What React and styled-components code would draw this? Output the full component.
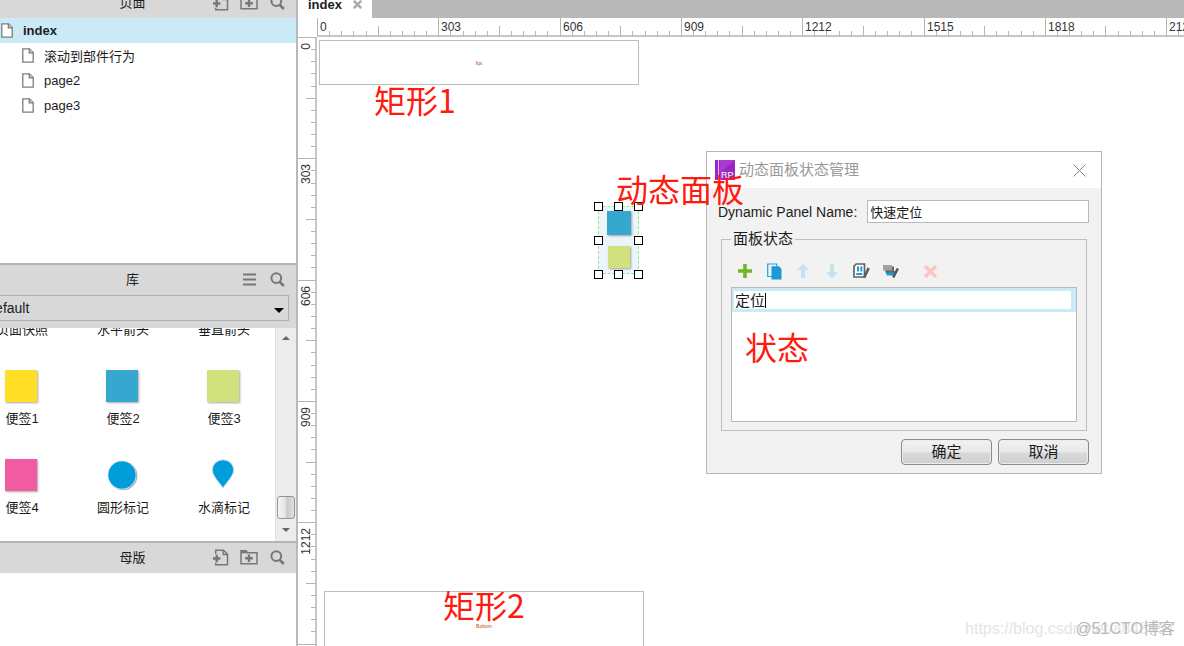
import React from 'react';
import styled, { createGlobalStyle } from 'styled-components';

const GlobalStyle = createGlobalStyle`
	* {
		box-sizing: border-box;
	}
	body {
		margin: 0;
		overflow: hidden;
		background: #fff;
		color: #1c1c1c;
		font-family: "Liberation Sans", "Noto Sans CJK SC", sans-serif;
		font-size: 13px;
	}
	button, input, select {
		font-family: inherit;
		color: inherit;
		margin: 0;
	}
`

const Shell = styled.div`
	display: flex;
	height: 100vh;
	overflow: hidden;
`

/* ---------- sidebar ---------- */

const Sidebar = styled.aside`
	display: flex;
	flex-direction: column;
	flex: none;
	width: 329px;
	margin-left: -31px;
	border-right: 2px solid #b9b9b9;
`

const Panel = styled.section`
	display: flex;
	flex-direction: column;
	flex: ${p => p.$grow ? '1' : 'none'};
	height: ${p => p.$height || 'auto'};
	margin-top: ${p => p.$tucked ? '-12px' : '0'};
	border-top: ${p => p.$tucked ? '0' : '2px solid #b4b4b4'};
`

const PanelHeader = styled.header`
	display: grid;
	grid-template-columns: 1fr auto 1fr;
	align-items: center;
	flex: none;
	height: 30px;
	padding-right: 10px;
	background: #d8d8d8;
`

const PanelTitle = styled.h2`
	grid-column: 2;
	margin: 0;
	padding-left: 10px;
	font-size: 13px;
	font-weight: 400;
	line-height: 18px;
`

const PanelActions = styled.div`
	display: flex;
	justify-content: flex-end;
	gap: 10px;
	padding-bottom: 2px;
`

const IconButton = styled.button`
	display: flex;
	align-items: center;
	justify-content: center;
	width: 18px;
	height: 18px;
	padding: 0;
	border: 0;
	background: none;
	color: #777;
`

const Tree = styled.ul`
	margin: 0;
	padding: 0;
	list-style: none;
`

const TreeItem = styled.button`
	display: flex;
	align-items: center;
	gap: 10px;
	width: 100%;
	height: 25px;
	padding: 0 0 0 ${p => p.$child ? '53px' : '32px'};
	border: 0;
	background: ${p => p.$selected ? '#cbeaf8' : 'none'};
	font-size: 13px;
	font-weight: ${p => p.$selected ? '700' : '400'};
	text-align: left;
`

const LibraryPicker = styled.div`
	position: relative;
	padding: 0 7px 7px;
	background: #d8d8d8;

	&:after {
		content: '';
		position: absolute;
		right: 12px;
		top: 13px;
		border: 5px solid transparent;
		border-top-color: #000;
		border-bottom: 0;
		pointer-events: none;
	}
`

const LibrarySelect = styled.select`
	appearance: none;
	display: block;
	width: 100%;
	height: 26px;
	padding: 0 8px;
	border: 1px solid #b0b0b0;
	border-radius: 0;
	background: #d8d8d8;
	font-size: 14px;
`

const LibraryBody = styled.div`
	display: flex;
	flex: 1;
	min-height: 0;
`

const WidgetScroller = styled.div`
	flex: 1;
	overflow: hidden;
	padding-left: 1px;
`

const WidgetGrid = styled.div`
	display: grid;
	grid-template-columns: repeat(3, 101px);
	row-gap: 31px;
	margin-top: -7px;
`

const Widget = styled.figure`
	display: flex;
	flex-direction: column;
	align-items: center;
	gap: 8px;
	margin: 0;
`

const WidgetLabel = styled.figcaption`
	font-size: 13px;
	line-height: 18px;
	padding-left: 3px;
`

const Note = styled.div`
	width: ${p => p.$size || 32}px;
	height: ${p => p.$size || 32}px;
	background: ${p => p.$color};
	box-shadow: 1px 1px 2px rgba(0, 0, 0, 0.35);
`

const ScrollTrack = styled.div`
	display: flex;
	flex-direction: column;
	align-items: center;
	width: 21px;
	padding: 8px 0 9px;
	border-left: 1px solid #e0e0e0;
	background: #ececec;
`

const ScrollArrow = styled.span`
	border: 4px solid transparent;
	border-top: ${p => p.$up ? '0' : '4px solid #666'};
	border-bottom: ${p => p.$up ? '4px solid #666' : '0'};
`

const ScrollThumb = styled.span`
	width: 18px;
	height: 23px;
	margin: auto 0 9px;
	border: 1px solid #959595;
	border-radius: 3px;
	background: linear-gradient(90deg, #f4f4f4, #e4e4e4 45%, #c9cace 55%, #dedede);
`

/* ---------- workspace ---------- */

const Workspace = styled.main`
	display: flex;
	flex-direction: column;
	flex: 1;
	min-width: 0;
`

const TabBar = styled.nav`
	display: flex;
	flex: none;
	height: 18px;
	background: #b8b8b8;
`

const Tab = styled.div`
	display: flex;
	align-items: center;
	gap: 11px;
	width: 74px;
	height: 26px;
	margin-top: -8px;
	padding: 0 0 2px 10px;
	background: #fff;
	font-weight: 700;
`

const TabClose = styled.button`
	display: flex;
	padding: 0;
	border: 0;
	background: none;
	color: #aaa;
`

const Stage = styled.div`
	display: grid;
	grid-template-columns: 19px 1fr;
	grid-template-rows: 19px 1fr;
	flex: 1;
	min-height: 0;
`

const RulerSvg = styled.svg`
	display: block;
	width: 100%;
	height: 100%;
	overflow: hidden;
	font-size: 12px;
	fill: #333;
`

const Canvas = styled.div`
	position: relative;
	overflow: hidden;
	min-width: 0;
`

const Shape = styled.div`
	position: absolute;
	left: ${p => p.$x}px;
	top: ${p => p.$y}px;
	display: flex;
	align-items: center;
	justify-content: center;
	width: 320px;
	height: ${p => p.$h}px;
	border: 1px solid #bdbdbd;
	color: #b4501c;
	font-size: 5px;
	line-height: 6px;
`

const DynamicPanel = styled.div`
	position: absolute;
	left: 281px;
	top: 169px;
	display: flex;
	flex-direction: column;
	align-items: center;
	justify-content: space-between;
	width: 41px;
	height: 68px;
	padding: 4px 0 5px;
	border: 1px dashed #8cf08c;
	background: #eef5fa;
`

const Handle = styled.span`
	position: absolute;
	left: ${p => p.$x}px;
	top: ${p => p.$y}px;
	width: 9px;
	height: 9px;
	margin: -5px;
	border: 1px solid #000;
	background: #fff;
`

const Remark = styled.div`
	position: absolute;
	left: ${p => p.$x}px;
	top: ${p => p.$y}px;
	color: #ff1a10;
	font-family: "Noto Sans CJK SC", sans-serif;
	font-size: 32px;
	line-height: 36px;
	white-space: nowrap;
`

const Watermark = styled.div`
	position: absolute;
	right: 9px;
	bottom: 7px;
	color: ${p => p.$color};
	font-size: 16px;
	line-height: 20px;
	white-space: nowrap;
`

/* ---------- dialog ---------- */

const Dialog = styled.form`
	position: absolute;
	left: 389px;
	top: 114px;
	width: 396px;
	border: 1px solid #b5b5b5;
	background: #f2f2f2;
`

const DialogTitle = styled.div`
	display: flex;
	align-items: center;
	gap: 4px;
	height: 36px;
	padding: 0 13px 0 8px;
	background: #fff;
	color: #999;
	font-size: 15px;
	line-height: 20px;

	button {
		margin-left: auto;
	}
`

const NameRow = styled.div`
	display: flex;
	align-items: center;
	gap: 10px;
	padding: 12px 12px 0 11px;
	font-size: 14px;
`

const NameInput = styled.input`
	flex: 1;
	min-width: 0;
	height: 23px;
	padding: 0 2px;
	border: 1px solid #b9b9b9;
	font-size: 13px;
`

const StateGroup = styled.fieldset`
	margin: 5px 14px 0;
	padding: 0 9px 8px;
	border: 1px solid #bfbfbf;
`

const GroupLegend = styled.legend`
	padding: 0 2px;
	font-size: 15px;
	line-height: 22px;
`

const Toolbar = styled.div`
	display: flex;
	align-items: center;
	gap: 11px;
	height: 37px;
	padding: 5px 5px 0;

	button:last-child {
		margin-left: 11px;
	}
`

const StateList = styled.div`
	height: 135px;
	border: 1px solid #b9b9b9;
	background: #fff;
`

const StateRow = styled.div`
	padding: 3px 5px 3px 2px;
	background: #cbeaf8;
`

const StateEdit = styled.div`
	display: flex;
	align-items: center;
	height: 18px;
	padding-left: 1px;
	background: #fff;
`

const StateInput = styled.input`
	field-sizing: content;
	height: 18px;
	padding: 0 0 2px;
	border: 0;
	outline: 0;
	background: none;
	font-size: 15px;
`

const Caret = styled.span`
	width: 1px;
	height: 15px;
	background: #000;
`

const DialogButtons = styled.div`
	display: flex;
	justify-content: flex-end;
	gap: 6px;
	padding: 8px 12px;
`

const PushButton = styled.button`
	width: 91px;
	height: 26px;
	padding: 0;
	border: 1px solid #8a8a8a;
	border-radius: 4px;
	background: linear-gradient(#f2f2f2, #e8e8e8 50%, #d8d8d8 55%, #cfcfcf);
	box-shadow: inset 0 0 0 1px #ececec;
	font-size: 15px;
	line-height: 20px;
`

/* ---------- icons ---------- */

const PageIcon = () => (
	<svg width="12" height="15" viewBox="0 0 12 15" fill="#fff" stroke="#7d7d7d" strokeWidth="1.3">
		<path d="M.8.8h6.7l3.7 3.7v9.7H.8z" />
		<path d="M7.3.8v4h4" fill="#ccc" />
	</svg>
)

const AddPageIcon = () => (
	<svg width="16" height="17" viewBox="0 0 16 17" fill="none" stroke="currentColor">
		<path d="M2.7 5V1.2h7.8l4 4v10.6H2.7v-2" strokeWidth="1.5" />
		<path d="M10.2 1v4.5h4.5" strokeWidth="1.3" />
		<path d="M0 9.5h7.4M3.7 5.8v7.4" strokeWidth="2.4" />
	</svg>
)

const AddFolderIcon = () => (
	<svg width="18" height="16" viewBox="0 0 18 16" fill="none" stroke="currentColor">
		<path d="M1 14.7V1.8h5.2l1.3 2H17v10.9z" strokeWidth="1.5" />
		<path d="M1 1.5h5.5l1.5 2.8H1z" fill="currentColor" stroke="none" />
		<path d="M5.2 9.3h7.6M9 5.5v7.6" strokeWidth="2.4" />
	</svg>
)

const SearchIcon = () => (
	<svg width="15" height="15" viewBox="0 0 15 15" fill="none" stroke="currentColor">
		<circle cx="6.3" cy="6.1" r="4.9" strokeWidth="2" />
		<path d="M9.8 9.8l4 4.2" strokeWidth="2.6" />
	</svg>
)

const MenuIcon = () => (
	<svg width="13" height="13" viewBox="0 0 13 13" stroke="currentColor" strokeWidth="2">
		<path d="M0 1.5h13M0 6.5h13M0 11.5h13" />
	</svg>
)

const CircleMarker = () => (
	<svg width="32" height="32" viewBox="0 0 32 32">
		<circle cx="17.2" cy="17" r="14.6" fill="#000" opacity=".12" />
		<circle cx="16.8" cy="16.6" r="14.4" fill="#000" opacity=".3" />
		<circle cx="16" cy="16" r="14.4" fill="#e4f0f6" />
		<circle cx="16" cy="16" r="13.7" fill="#009ddb" />
	</svg>
)

const DropMarker = () => (
	<svg width="32" height="32" viewBox="0 0 32 32">
		<path
			d="M16 29C13 24 5.3 17 5.3 11A10.7 10.2 0 0 1 26.7 11C26.7 17 19 24 16 29z"
			fill="#009ddb"
			stroke="#bfe0ee"
			strokeWidth="1"
		/>
	</svg>
)

const AppIcon = () => (
	<svg width="20" height="20" viewBox="0 0 20 20">
		<path d="M0 0h20v20H0z" fill="#9a27c4" />
		<path d="M5 0h15L5 13z" fill="#a93ad0" />
		<path d="M3.5 0v20" stroke="#e4bdf0" strokeWidth="1" />
		<text x="6" y="18" fontSize="9" fill="#fff">RP</text>
	</svg>
)

const CloseIcon = () => (
	<svg width="13" height="13" viewBox="0 0 13 13" stroke="#888" strokeWidth="1">
		<path d="M.5.5l12 12M12.5.5l-12 12" />
	</svg>
)

const PlusIcon = () => (
	<svg width="14" height="14" viewBox="0 0 14 14" stroke="#72b626" strokeWidth="3.6">
		<path d="M0 7h14M7 0v14" />
	</svg>
)

const CopyIcon = () => (
	<svg width="15" height="17" viewBox="0 0 15 17">
		<path d="M.7 1h9v12.5H.7z" fill="#e6f4fb" stroke="#2b9fd5" strokeWidth="1.2" />
		<path d="M4.5 3.2H12l2.5 2.5V16.5h-10z" fill="#1b98d5" />
	</svg>
)

const ArrowIcon = ({ down }) => (
	<svg width="12" height="14" viewBox="0 0 12 14" fill="#c4e2f0">
		<path
			d="M6 0l6 6H8v8H4V6H0z"
			transform={down ? 'rotate(180 6 7)' : undefined}
		/>
	</svg>
)

const EditStateIcon = () => (
	<svg width="17" height="16" viewBox="0 0 17 16" fill="none">
		<path d="M3.2 1h8.3v13H1V3.2z" fill="#fff" stroke="#606468" strokeWidth="1.7" />
		<path d="M5 3.5v5M8.3 3.5v5M3.3 11h6" stroke="#1b98d5" strokeWidth="2" />
		<path d="M15.7 5l-4.5 9.5" stroke="#5b5b5b" strokeWidth="2.6" />
	</svg>
)

const EditAllIcon = () => (
	<svg width="17" height="16" viewBox="0 0 17 16">
		<path d="M3 8h10v4.5H5z" fill="#1b98d5" />
		<path d="M2.5 3.5h9.5v6H4z" fill="#666" />
		<path d="M1 2h9v5.5H1z" fill="#a2a2a2" />
		<path d="M15.8 5.5l-4.6 9" stroke="#555" strokeWidth="2.6" />
	</svg>
)

const CrossIcon = ({ size = 13 }) => (
	<svg width={size} height={size} viewBox="0 0 12 12" stroke="currentColor" strokeWidth="3.4">
		<path d="M1 1l10 10M11 1L1 11" />
	</svg>
)

/* ---------- parts ---------- */

const TICK = 12.13;
const UNITS_PER_MAJOR = 303;

const Ruler = ({ vertical, majors }) => {
	const marks = [];
	for (let i = 0; i < majors * 10; i++) {
		const at = Math.round(i * TICK) + 0.5;
		const start = i % 10 === 0 ? 0 : i % 5 === 0 ? 8 : 13;
		marks.push(vertical
			? <path key={i} d={`M${start} ${at}H18`} />
			: <path key={i} d={`M${at} ${start}V18`} />
		);
	}
	const labels = [];
	for (let i = 0; i < majors; i++) {
		const at = Math.round(i * TICK * 10);
		labels.push(vertical
			? <text key={i} textAnchor="end" transform={`translate(12 ${at + 6}) rotate(-90)`}>{i * UNITS_PER_MAJOR}</text>
			: <text key={i} x={at + 3} y="13">{i * UNITS_PER_MAJOR}</text>
		);
	}
	return (
		<RulerSvg>
			<g stroke="#b4b4b4">
				{marks}
				{vertical
					? <path d="M18 0V3000" strokeWidth="1.5" />
					: <path d="M0 18H4000" strokeWidth="1.5" />}
			</g>
			{labels}
		</RulerSvg>
	);
}

const pages = ['滚动到部件行为', 'page2', 'page3'];

const widgets = [
	{ label: '页面快照' },
	{ label: '水平箭头' },
	{ label: '垂直箭头' },
	{ label: '便签1', icon: <Note $color="#ffde26" /> },
	{ label: '便签2', icon: <Note $color="#36a8d0" /> },
	{ label: '便签3', icon: <Note $color="#d0e17d" /> },
	{ label: '便签4', icon: <Note $color="#f15ba1" /> },
	{ label: '圆形标记', icon: <CircleMarker /> },
	{ label: '水滴标记', icon: <DropMarker /> }
];

const handles = [0, 34, 68].flatMap(y => [0, 20, 40].map(x => [x, y]))
	.filter(([x, y]) => !(x === 20 && y === 34));

const PageActions = () => (
	<PanelActions>
		<IconButton type="button" aria-label="添加页面"><AddPageIcon /></IconButton>
		<IconButton type="button" aria-label="添加文件夹"><AddFolderIcon /></IconButton>
		<IconButton type="button" aria-label="搜索"><SearchIcon /></IconButton>
	</PanelActions>
)

const LeftSide = () => (
	<Sidebar>
		<Panel $tucked $height="275px">
			<PanelHeader>
				<PanelTitle>页面</PanelTitle>
				<PageActions />
			</PanelHeader>
			<Tree>
				<li><TreeItem $selected><PageIcon />index</TreeItem></li>
				{pages.map(name => (
					<li key={name}><TreeItem $child><PageIcon />{name}</TreeItem></li>
				))}
			</Tree>
		</Panel>
		<Panel $height="278px">
			<PanelHeader>
				<PanelTitle>库</PanelTitle>
				<PanelActions>
					<IconButton type="button" aria-label="菜单"><MenuIcon /></IconButton>
					<IconButton type="button" aria-label="搜索"><SearchIcon /></IconButton>
				</PanelActions>
			</PanelHeader>
			<LibraryPicker>
				<LibrarySelect aria-label="库" defaultValue="Default">
					<option>Default</option>
				</LibrarySelect>
			</LibraryPicker>
			<LibraryBody>
				<WidgetScroller>
					<WidgetGrid>
						{widgets.map(w => (
							<Widget key={w.label}>
								{w.icon}
								<WidgetLabel>{w.label}</WidgetLabel>
							</Widget>
						))}
					</WidgetGrid>
				</WidgetScroller>
				<ScrollTrack>
					<ScrollArrow $up />
					<ScrollThumb />
					<ScrollArrow />
				</ScrollTrack>
			</LibraryBody>
		</Panel>
		<Panel $grow>
			<PanelHeader>
				<PanelTitle>母版</PanelTitle>
				<PageActions />
			</PanelHeader>
		</Panel>
	</Sidebar>
)

const ToolButton = styled(IconButton)`
	color: #f8c6c4;
`

const StateDialog = () => (
	<Dialog onSubmit={e => e.preventDefault()}>
		<DialogTitle>
			<AppIcon />
			动态面板状态管理
			<IconButton type="button" aria-label="关闭"><CloseIcon /></IconButton>
		</DialogTitle>
		<NameRow>
			<label htmlFor="panel-name">Dynamic Panel Name:</label>
			<NameInput id="panel-name" defaultValue="快速定位" />
		</NameRow>
		<StateGroup>
			<GroupLegend>面板状态</GroupLegend>
			<Toolbar>
				<ToolButton type="button" aria-label="添加"><PlusIcon /></ToolButton>
				<ToolButton type="button" aria-label="复制"><CopyIcon /></ToolButton>
				<ToolButton type="button" aria-label="上移"><ArrowIcon /></ToolButton>
				<ToolButton type="button" aria-label="下移"><ArrowIcon down /></ToolButton>
				<ToolButton type="button" aria-label="编辑状态"><EditStateIcon /></ToolButton>
				<ToolButton type="button" aria-label="编辑全部状态"><EditAllIcon /></ToolButton>
				<ToolButton type="button" aria-label="删除"><CrossIcon /></ToolButton>
			</Toolbar>
			<StateList>
				<StateRow>
					<StateEdit>
						<StateInput aria-label="状态名称" defaultValue="定位" />
						<Caret />
					</StateEdit>
				</StateRow>
			</StateList>
		</StateGroup>
		<DialogButtons>
			<PushButton type="submit">确定</PushButton>
			<PushButton type="button">取消</PushButton>
		</DialogButtons>
	</Dialog>
)

export default function App() {
	return (
		<>
			<GlobalStyle />
			<Shell>
				<LeftSide />
				<Workspace>
					<TabBar>
						<Tab>
							index
							<TabClose type="button" aria-label="关闭标签"><CrossIcon size={9} /></TabClose>
						</Tab>
					</TabBar>
					<Stage>
						<span />
						<Ruler majors={20} />
						<Ruler vertical majors={12} />
						<Canvas>
							<Shape $x={2} $y={3} $h={45}>fqs</Shape>
							<Shape $x={7} $y={554} $h={70}>Bottom</Shape>
							<DynamicPanel>
								<Note $size={24} $color="#36a8d0" />
								<Note $size={22} $color="#d0e17d" />
								{handles.map(([x, y]) => <Handle key={`${x}-${y}`} $x={x} $y={y} />)}
							</DynamicPanel>
							<StateDialog />
							<Remark $x={57} $y={44}>矩形1</Remark>
							<Remark $x={299} $y={133}>动态面板</Remark>
							<Remark $x={428} $y={291}>状态</Remark>
							<Remark $x={126} $y={549}>矩形2</Remark>
							<Watermark $color="#e4e4e4">https://blog.csdn.net/a848457</Watermark>
							<Watermark $color="#b9b9b9">@51CTO博客</Watermark>
						</Canvas>
					</Stage>
				</Workspace>
			</Shell>
		</>
	);
}
